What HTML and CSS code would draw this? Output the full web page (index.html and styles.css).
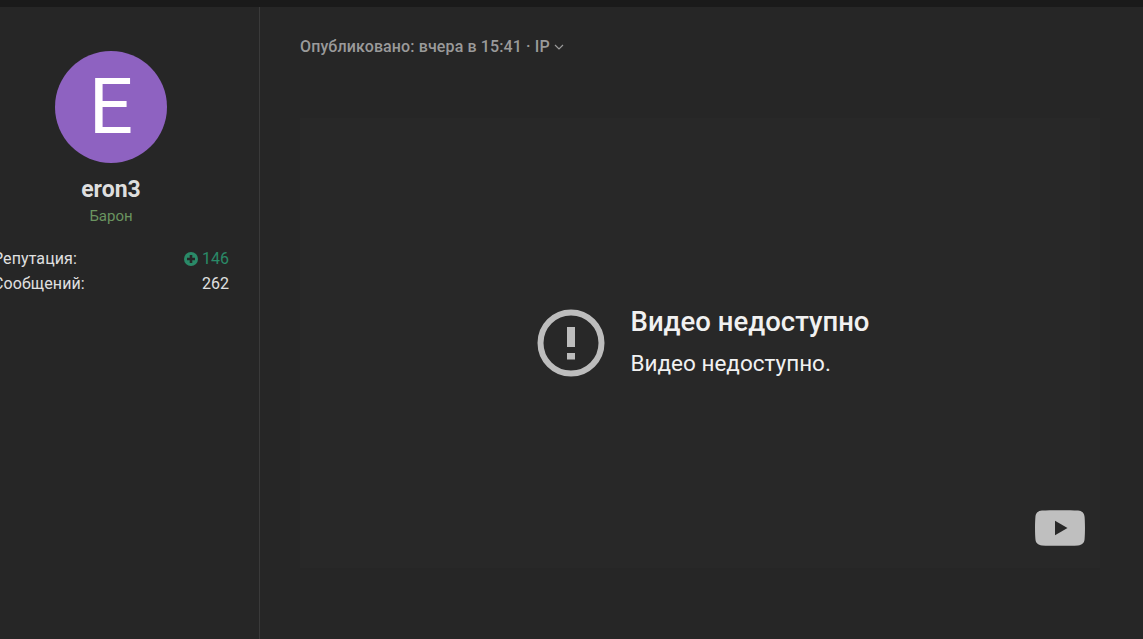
FILE: index.html
```html
<!DOCTYPE html>
<html lang="ru">
<head>
  <meta charset="UTF-8" />
  <meta name="viewport" content="width=device-width, initial-scale=1.0" />
  <title>Сообщение</title>
  <link rel="stylesheet" href="styles.css">
</head>
<body>
  <div class="top-strip"></div>

  <div class="post">
    <!-- Автор -->
    <aside class="author">
      <div class="avatar">E</div>
      <div class="author-name">eron3</div>
      <div class="author-rank">Барон</div>
      <dl class="author-stats">
        <div class="stat-row">
          <dt>Репутация:</dt>
          <dd class="rep">
            <svg class="rep-icon" viewBox="0 0 14 14" aria-hidden="true">
              <circle cx="7" cy="7" r="7" fill="#2a8a68" />
              <path d="M7 3v8M3 7h8" stroke="#262626" stroke-width="2.6" fill="none" />
            </svg>
            146
          </dd>
        </div>
        <div class="stat-row">
          <dt>Сообщений:</dt>
          <dd>262</dd>
        </div>
      </dl>
    </aside>

    <!-- Сообщение -->
    <main class="post-body">
      <div class="post-meta">
        <span>Опубликовано: вчера в 15:41 · IP</span>
        <svg class="meta-arrow" viewBox="0 0 10 6" aria-hidden="true">
          <path d="M1 1l4 4 4-4" stroke="#9a9a9a" stroke-width="1.2" fill="none" />
        </svg>
      </div>

      <div class="video">
        <div class="video-error">
          <svg class="error-icon" viewBox="0 0 68 68" aria-hidden="true">
            <circle cx="34" cy="34" r="30.5" stroke="#bdbdbd" stroke-width="6" fill="none" />
            <rect x="30" y="18" width="8" height="20" fill="#bdbdbd" />
            <rect x="30" y="44" width="8" height="6.5" fill="#bdbdbd" />
          </svg>
          <div class="error-text">
            <div class="error-title">Видео недоступно</div>
            <div class="error-sub">Видео недоступно.</div>
          </div>
        </div>
        <svg class="yt-logo" viewBox="0 0 50 36" aria-hidden="true">
          <path d="M7 0.6C15 0 35 0 43 0.6 47 1 49.3 3 49.6 7 50.1 13 50.1 23 49.6 29 49.3 33 47 35 43 35.4 35 36 15 36 7 35.4 3 35 0.7 33 0.4 29 -0.1 23 -0.1 13 0.4 7 0.7 3 3 1 7 0.6Z" fill="#bfbfbf" />
          <path d="M20 10.7L32.5 18 20 25.3Z" fill="#282828" />
        </svg>
      </div>
    </main>
  </div>
</body>
</html>
```

FILE: styles.css
```css
body {
  margin: 0;
  height: 639px;
  overflow: hidden;
  background-color: #262626;
  color: #e0e0e0;
  font-family: Roboto, "Liberation Sans", sans-serif;
  display: flex;
  flex-direction: column;
}

.top-strip {
  height: 7px;
  background-color: #1a1a1a;
}

.post {
  flex: 1;
  display: flex;
}

/* Колонка автора, левый край уходит за экран */
.author {
  width: 297px;
  margin-left: -37px;
  padding: 44px 30px 0;
  box-sizing: border-box;
  border-right: 1px solid #3a3a3a;
  display: flex;
  flex-direction: column;
  align-items: center;
}

.avatar {
  width: 112px;
  height: 112px;
  border-radius: 50%;
  background-color: #8e62c1;
  color: #fff;
  font-size: 78px;
  font-weight: 400;
  line-height: 112px;
  text-align: center;
}

.author-name {
  margin-top: 14px;
  font-size: 23px;
  font-weight: 700;
  line-height: 26px;
  color: #dedede;
}

.author-rank {
  margin-top: 3px;
  font-size: 15px;
  line-height: 20px;
  color: #6a9460;
}

.author-stats {
  width: 100%;
  margin: 20px 0 0;
  font-size: 16px;
}

.stat-row {
  display: flex;
  justify-content: space-between;
  line-height: 25px;
}

.stat-row dt,
.stat-row dd {
  margin: 0;
}

.stat-row dt {
  letter-spacing: 0.1px;
}

.rep {
  display: flex;
  align-items: center;
  gap: 4px;
  color: #2a8a68;
}

.rep-icon {
  width: 14px;
  height: 14px;
}

.post-body {
  flex: 1;
  padding: 30px 43px 0 40px;
}

.post-meta {
  display: flex;
  align-items: center;
  gap: 4px;
  font-size: 16px;
  font-weight: 500;
  letter-spacing: 0.12px;
  line-height: 20px;
  color: #9a9a9a;
}

.meta-arrow {
  width: 10px;
  height: 6px;
}

.video {
  position: relative;
  width: 800px;
  height: 450px;
  margin-top: 61px;
  background-color: #282828;
  display: flex;
  align-items: center;
  justify-content: center;
}

.video-error {
  display: flex;
  align-items: center;
  gap: 26px;
  margin-left: 6px;
}

.error-icon {
  width: 68px;
  height: 68px;
}

.error-text {
  padding-bottom: 5px;
}

.error-title {
  font-size: 27.5px;
  font-weight: 500;
  line-height: 32px;
  color: #f1f1f1;
}

.error-sub {
  margin-top: 12px;
  font-size: 22.5px;
  line-height: 26px;
  color: #f1f1f1;
}

.yt-logo {
  position: absolute;
  right: 15px;
  bottom: 22px;
  width: 50px;
  height: 36px;
}
```
